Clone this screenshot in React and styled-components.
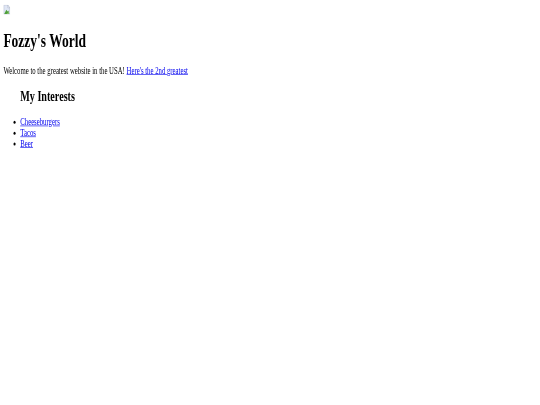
import React from "react";
import styled, { createGlobalStyle } from "styled-components";

const GlobalStyle = createGlobalStyle`
  html, body {
    margin: 0;
    background: #fff;
  }
`;

const Frame = styled.div`
  width: 540px;
  height: 405px;
  overflow: hidden;
  filter: blur(0.3px);
`;

// the page is laid out at 1280 wide and squeezed into the 540x405 window
const Page = styled.div`
  width: 1280px;
  box-sizing: border-box;
  padding: 8px;
  color: #000;
  font-family: "Liberation Serif", "Times New Roman", serif;
  font-size: 16px;
  transform: scale(0.4219, 0.604);
  transform-origin: top left;
`;

const ImageRow = styled.div`
  height: 20px;
`;

const BrokenImage = styled.svg`
  display: block;
  width: 16px;
  height: 16px;
`;

const Title = styled.h1`
  margin: 21.44px 0;
  font-size: 32px;
  font-weight: bold;
`;

const Intro = styled.p`
  margin: 16px 0;
`;

const SubTitle = styled.h2`
  margin: 19.92px 0 19.92px 40px;
  font-size: 24px;
  font-weight: bold;
`;

const List = styled.ul`
  margin: 16px 0;
  padding: 0 0 0 40px;
`;

const TextLink = styled.a`
  color: #0000ee;
  text-decoration: underline;
`;

const interests = ["Cheeseburgers", "Tacos", "Beer"];

export default function App() {
  return (
    <Frame>
      <GlobalStyle />
      <Page>
        <ImageRow>
          <BrokenImage viewBox="0 0 16 16">
            <path d="M1 .5H10.5L15 5V15.5H1Z" fill="#dfe6f5" stroke="#a9b3c6" />
            <path d="M10.5 .5V5H15Z" fill="#fff" stroke="#a9b3c6" />
            <path d="M2 15L7 8L10 11L12 9.5L14 15Z" fill="#4f9f3a" />
            <path d="M8 15L13 11V15Z" fill="#8cc56f" />
          </BrokenImage>
        </ImageRow>
        <Title>Fozzy's World</Title>
        <Intro>
          Welcome to the greatest website in the USA! <TextLink href="#">Here's the 2nd greatest</TextLink>
        </Intro>
        <SubTitle>My Interests</SubTitle>
        <List>
          {interests.map((item) => (
            <li key={item}>
              <TextLink href="#">{item}</TextLink>
            </li>
          ))}
        </List>
      </Page>
    </Frame>
  );
}
